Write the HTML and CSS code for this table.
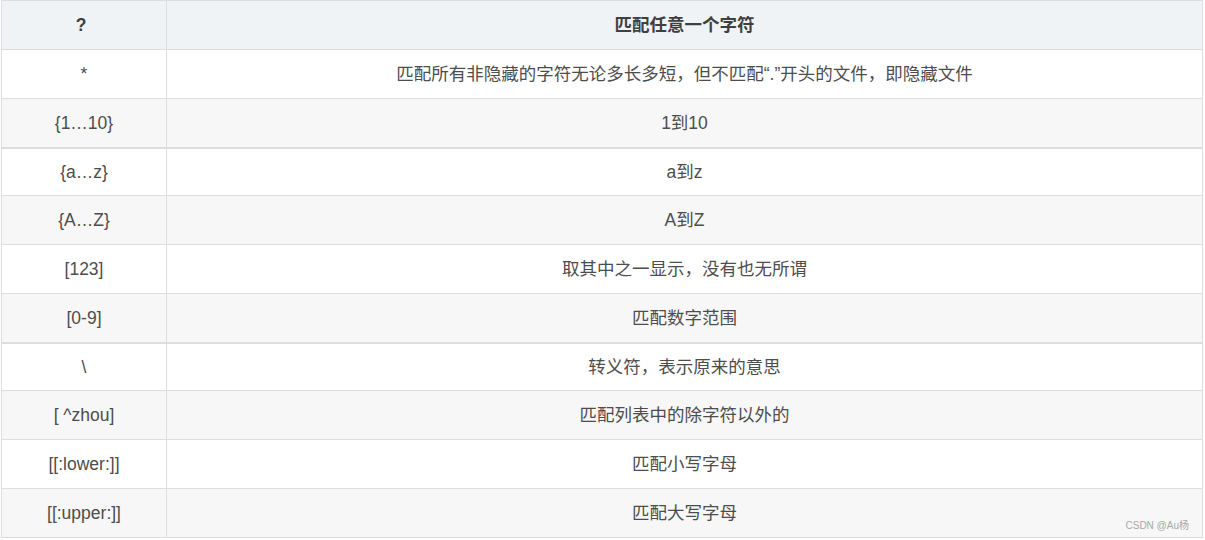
FILE: index.html
```html
<!DOCTYPE html>
<html lang="zh-CN">
<head>
<meta charset="utf-8">
<title>通配符</title>
<link rel="stylesheet" href="styles.css">
</head>
<body>
<div class="wrap">
  <table class="tbl">
    <thead>
      <tr><th class="c1">?</th><th>匹配任意一个字符</th></tr>
    </thead>
    <tbody>
      <tr><td class="c1">*</td><td>匹配所有非隐藏的字符无论多长多短，但不匹配“.”开头的文件，即隐藏文件</td></tr>
      <tr class="sep"><td class="c1">{1…10}</td><td>1到10</td></tr>
      <tr class="after"><td class="c1">{a…z}</td><td>a到z</td></tr>
      <tr><td class="c1">{A…Z}</td><td>A到Z</td></tr>
      <tr><td class="c1">[123]</td><td>取其中之一显示，没有也无所谓</td></tr>
      <tr class="sep"><td class="c1">[0-9]</td><td>匹配数字范围</td></tr>
      <tr class="after"><td class="c1">\</td><td>转义符，表示原来的意思</td></tr>
      <tr><td class="c1">[ ^zhou]</td><td>匹配列表中的除字符以外的</td></tr>
      <tr><td class="c1">[[:lower:]]</td><td>匹配小写字母</td></tr>
      <tr><td class="c1">[[:upper:]]</td><td>匹配大写字母</td></tr>
    </tbody>
  </table>
  <div class="mark">CSDN @Au杨</div>
</div>
</body>
</html>
```
FILE: styles.css
```css
html, body {
  margin: 0;
  padding: 0;
  background: #ffffff;
}
body {
  font-family: "Liberation Sans", "Noto Sans CJK SC", sans-serif;
  color: #4d4d4d;
}
.wrap {
  position: relative;
  padding-left: 1px;
  width: 1202px;
  height: 540px;
}
.tbl {
  border-collapse: collapse;
  width: 1202px;
  table-layout: fixed;
  font-size: 17.5px;
  line-height: 20px;
}
.tbl th, .tbl td {
  border: 1px solid #dddddd;
  text-align: center;
  vertical-align: middle;
  padding: 0 8px;
  height: 48px;
}
.tbl .c1 {
  width: 148px;
}
.tbl th {
  background: #eff3f5;
  color: #3f3f3f;
  font-weight: bold;
}
.tbl th.c1 {
  padding: 0 11px 0 5px;
}
.tbl tbody tr:nth-child(even) td {
  background: #f7f7f7;
}
.tbl tr.sep td {
  border-bottom: 2px solid #dddddd;
}
.tbl tr.after td {
  height: 46px;
}
.mark {
  position: absolute;
  right: 14px;
  bottom: 8px;
  font-size: 10px;
  color: #a8a8a8;
  font-family: "Liberation Sans", "Noto Sans CJK SC", sans-serif;
}
```
